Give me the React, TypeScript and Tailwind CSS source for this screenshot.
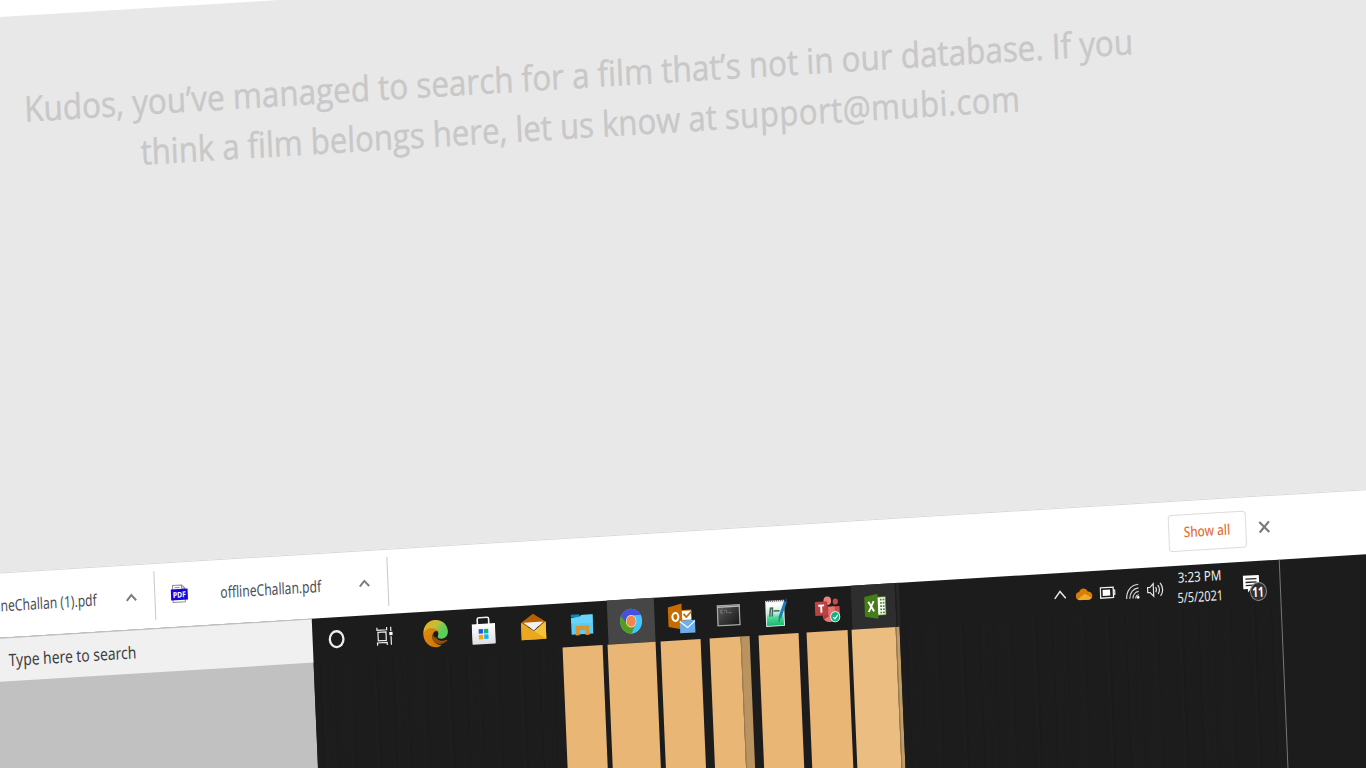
import React from "react";

const UI = "font-['Noto_Sans','Open_Sans',sans-serif]";

function Slot({ children, className = "" }: { children: React.ReactNode; className?: string }) {
  return <div className={"flex h-full w-[49px] shrink-0 items-center justify-center " + className}>{children}</div>;
}

function Caret() {
  return (
    <svg width="12" height="10" viewBox="0 0 12 10" fill="none" stroke="#7b7d80" strokeWidth="2">
      <path d="M1.3 8 6 2.6 10.7 8" />
    </svg>
  );
}

function Cortana() {
  return (
    <svg width="18" height="20" viewBox="0 0 18 20" fill="none">
      <ellipse cx="9" cy="10" rx="6.8" ry="7.9" stroke="#ededed" strokeWidth="2.3" />
    </svg>
  );
}

function TaskView() {
  return (
    <svg width="18" height="20" viewBox="0 0 18 20" fill="none" stroke="#ededed" strokeWidth="1.2">
      <path d="M1.6 1v2.7h9.700V1M2.500 5.800h8v8.400h-8zM1.600 19v-2.700h9.700V19M15.400 1v4.200M15.400 10.300V19" />
      <path d="M13.800 6h3.200v3.200h-3.200z" fill="#fff" stroke="none" />
    </svg>
  );
}

function Edge() {
  return (
    <svg width="26" height="29" viewBox="0 0 26 29">
      <defs>
        <linearGradient id="eg" x1="0" y1="0" x2="1" y2=".7">
          <stop offset="0" stopColor="#f1a51b" />
          <stop offset=".45" stopColor="#c9bd38" />
          <stop offset=".8" stopColor="#59cf58" />
        </linearGradient>
        <linearGradient id="eo" x1="0" y1="0" x2=".8" y2="1">
          <stop offset="0" stopColor="#e18c14" />
          <stop offset="1" stopColor="#ce7608" />
        </linearGradient>
      </defs>
      <path d="M.7 14C1 5.500 6.500 1 13 1c7.500 0 12.300 5.600 12.300 12 0 4.500-3 7-6.500 7-2.800 0-4.200-1.200-4-2.500 2-3 .5-6.200-2.600-7.300C8 9 3.500 10.200.7 14Z" fill="url(#eg)" />
      <path d="M.6 14C2 10.500 5.500 8.300 9 8.600c3.400.3 5.400 2.200 5.900 3.600-3 .1-5.300 2-5.300 5.300 0 4.500 3.400 9 9.100 8.500-1.800 1.600-4 2.400-6.200 2.200C5.600 27.700.5 21.700.6 14Z" fill="url(#eo)" />
      <path d="M10.600 13.900c-2.200 3.200-1 8.100 2.400 10.100 3.500 2.200 8 1.100 11.100-1.700.8-.8.3-1.300-.5-1-3.500 1.400-7.500.8-9.300-1.600-.8-1-.7-2 0-3-1.700-.4-3-1.200-3.700-2.800Z" fill="#965006" />
      <ellipse cx="13" cy="15.200" rx="2.300" ry="3.100" fill="#1c1c1c" />
    </svg>
  );
}

function Store() {
  return (
    <svg width="24" height="29" viewBox="0 0 24 29">
      <defs>
        <linearGradient id="st" x1="0" y1="0" x2="0" y2="1">
          <stop stopColor="#ffffff" />
          <stop offset="1" stopColor="#dedfe3" />
        </linearGradient>
      </defs>
      <path d="M6 10V3q0-1.700 1.600-1.700h8.200q1.600 0 1.600 1.700v7" fill="none" stroke="#f1f1f1" strokeWidth="1.600" />
      <path d="M.3 7.500h23.300V27q0 1-1 1H1.300q-1 0-1-1Z" fill="url(#st)" />
      <path d="M7 12.800h4.300v4.500H7z" fill="#2058e8" />
      <path d="M12.300 12.800h4.300v4.500h-4.300z" fill="#12b57c" />
      <path d="M7 18.400h4.300v4.500H7z" fill="#f5a40c" />
      <path d="M12.300 18.400h4.300v4.500h-4.300z" fill="#16b0fa" />
    </svg>
  );
}

function Mail() {
  return (
    <svg width="26" height="28" viewBox="0 0 26 28">
      <path d="M.6 9 12.800.7 25.200 9v4H.6z" fill="#b66003" />
      <path d="M.6 9 13 18 25.200 9v17.300H.6z" fill="#e8a51d" />
      <path d="M13 18 25.200 9v17.300z" fill="#f4c438" />
      <path d="M.6 9 25.200 26.300H.6z" fill="#e9a820" />
      <path d="m3 9 10 8.300L23 9z" fill="#f1f1f1" />
    </svg>
  );
}

function Explorer() {
  return (
    <svg width="23" height="23" viewBox="0 0 23 23">
      <path d="M.6 1h8l1 2.500H.6z" fill="#0689bc" />
      <path d="M.6 4.200 10 3l.8-1.300h11.500V21H.6z" fill="#5bcdf8" />
      <path d="M10.500 1.700h11.800V10H.6V5h9z" fill="#72d8fd" opacity=".6" />
      <path d="M4.700 22v-9.500h13.800V22h-4v-5h-5.800v5z" fill="#d9952f" />
    </svg>
  );
}

function Chrome() {
  return (
    <svg width="23" height="26" viewBox="0 0 24 26" preserveAspectRatio="none">
      <ellipse cx="12" cy="13" rx="11.500" ry="12.500" fill="#43c5ff" />
      <path d="M1.800 7C-1.600 14.500 2.200 24.500 12 25.400L17 15l-8-6Z" fill="#579c18" />
      <path d="M1.800 7.200C6-1.600 18-1.600 22.300 7.200H12c-3.500 0-5.500 2.500-5.500 6.800Z" fill="#4750dc" />
      <ellipse cx="12" cy="13" rx="5.500" ry="6.300" fill="#e5ece6" />
      <ellipse cx="12" cy="13" rx="4.800" ry="5.500" fill="#f5854f" />
    </svg>
  );
}

function Outlook() {
  return (
    <svg width="28" height="31" viewBox="0 0 28 31">
      <path d="M12 7h12v12H12z" fill="#d07708" />
      <path d="M14.500 8h9v9h-9z" fill="#fff" />
      <path d="m16 11 2.700 3.200L24 9" fill="none" stroke="#c76c00" strokeWidth="1.800" />
      <path d="m.6 3.500 13.800-3v26L.6 23.200z" fill="#c66c00" />
      <ellipse cx="7.800" cy="13.500" rx="3" ry="4" fill="none" stroke="#fff" strokeWidth="2" />
      <path d="M12 17.500h15.200v12.600H12z" fill="#6caeea" />
      <path d="m12 18.300 7.600 6.500 7.600-6.500" fill="none" stroke="#fff" strokeWidth="1.200" />
    </svg>
  );
}

function Terminal() {
  return (
    <svg width="24" height="22" viewBox="0 0 24 22">
      <defs>
        <linearGradient id="tm" x1="0" y1="0" x2="1" y2="1">
          <stop stopColor="#606060" />
          <stop offset=".5" stopColor="#383838" />
          <stop offset="1" stopColor="#171717" />
        </linearGradient>
      </defs>
      <path d="M1 1h22v20H1z" fill="url(#tm)" stroke="#a8a8a8" strokeWidth="1.300" />
      <path d="M1 2.500h22" stroke="#bababa" strokeWidth="1.400" />
      <path d="M6.500 5.500H4.400v3h2.100M8 5.600v.6m0 1.800v.6M9.200 5.300l1.600 3.500M12 8.500h3" fill="none" stroke="#888" strokeWidth=".8" />
    </svg>
  );
}

function Notepad() {
  return (
    <svg width="24" height="29" viewBox="0 0 24 29">
      <defs>
        <linearGradient id="np" x1="0" y1="0" x2="0" y2="1">
          <stop offset=".1" stopColor="#fff" />
          <stop offset=".48" stopColor="#c1ead5" />
          <stop offset=".65" stopColor="#4cda99" />
          <stop offset="1" stopColor="#15ba72" />
        </linearGradient>
      </defs>
      <path d="M1 2h18.800v26H1z" fill="#e8eeeb" />
      <path d="M2 4h16.800v23H2z" fill="url(#np)" />
      <path d="M2 2.500h17" stroke="#555" strokeWidth="1.400" strokeDasharray="1 1" />
      <path d="M5 18 6 9.500h2L7.500 18M9 12.500h6" fill="none" stroke="#43685a" strokeWidth="1.500" />
      <path d="m21.500 3-6.700 17" stroke="#1a83bd" strokeWidth="3" />
      <path d="m22.300 1-1.400 3" stroke="#293063" strokeWidth="2.500" />
      <path d="m14.800 20-1 3.500" stroke="#4f625c" strokeWidth="1.200" />
    </svg>
  );
}

function Teams() {
  return (
    <svg width="26" height="29" viewBox="0 0 26 29">
      <ellipse cx="13" cy="5.500" rx="3.800" ry="4.300" fill="#e98280" />
      <ellipse cx="21" cy="6.800" rx="2.600" ry="3" fill="#c84b49" />
      <path d="M17 11.500h8V20q0 5-4.500 5.200H17z" fill="#c84f4d" />
      <path d="M8 11.500h12v10q0 5-5 5.500-6-.2-7-6z" fill="#e67674" />
      <path d="M8 11.500h5.500v10L8.500 24z" fill="#ac3838" />
      <rect x=".4" y="6" width="12.600" height="14" rx=".8" fill="#bb4241" />
      <path d="M3.700 10h6M6.700 10v7" stroke="#fff" strokeWidth="1.900" />
      <ellipse cx="20.300" cy="22" rx="5" ry="5.600" fill="#fff" />
      <ellipse cx="20.300" cy="22" rx="4.200" ry="4.800" fill="#13b282" />
      <path d="m18.200 22.200 1.700 1.900 3-3.900" fill="none" stroke="#fff" strokeWidth="1.200" />
    </svg>
  );
}

function Excel() {
  return (
    <svg width="24" height="26" viewBox="0 0 24 26">
      <path d="M12 4h10v18H12z" fill="#fff" stroke="#4e912d" strokeWidth=".7" />
      <path d="M16.500 6.700h4.500M16.500 10h4.500M16.500 13.200h4.500M16.500 16.400h4.500M16.500 19.600h4.500" stroke="#4b8b27" strokeWidth="1.700" strokeDasharray="1.800 .9" />
      <path d="m1 3 13.300-2.500v25L1 22.800z" fill="#457d16" />
      <path d="m4.800 8 5.500 10M10.200 7.700 5 18.300" stroke="#fff" strokeWidth="1.900" />
    </svg>
  );
}

function PdfIcon() {
  return (
    <svg width="18" height="20" viewBox="0 0 18 20">
      <path d="M2.500 18.500V1.500h9.200l3 3.300v13.700z" fill="#fff" stroke="#8b8b91" />
      <path d="M4.500 3.800h5M11.500 1.500v3.300h3.200" fill="none" stroke="#8b8b91" />
      <path d="M.6 5.500h16.800v11H.6z" fill="#1706dd" />
      <text x="9" y="13.900" textAnchor="middle" textLength="13" lengthAdjust="spacingAndGlyphs" fill="#fff" fontFamily="Noto Sans" fontSize="8" fontWeight="700">PDF</text>
    </svg>
  );
}

const streaks =
  "bg-[repeating-linear-gradient(90deg,#1c1c1c_0px,#1c1c1c_5px,#1a1a1a_7px,#1d1d1d_8px,#1c1c1c_17px,#1e1e1e_18px,#1b1b1b_20px,#1c1c1c_22px,#1d1d1d_37px,#1b1b1b_38px,#1c1c1c_41px,#1c1c1c_59px,#1e1e1e_61px,#1a1a1a_63px,#1c1c1c_66px,#1c1c1c_73px)]";

export default function App() {
  return (
    <div className="h-[768px] w-[1366px] overflow-hidden bg-white">
      <div className="-ml-[40px] h-[880px] w-[1450px] origin-top-left transform-[matrix(1,-0.061,0.042,1,0,2.44)]">
        <header className="h-[17px] bg-white" />

        <main className="flex h-[554px] flex-col items-center bg-[#e8e8e8] pt-[68px] pr-[223px] font-['Open_Sans',sans-serif] text-[35px] leading-[49.500px] text-[#c8c8c8] [-webkit-text-stroke:0.5px_#c8c8c8]">
          <p className="scale-x-[.897] whitespace-nowrap">Kudos, you’ve managed to search for a film that’s not in our database. If you</p>
          <p className="scale-x-[.889] whitespace-nowrap">
            think a film belongs here, let us know at <span className="tracking-[.540px]">support@mubi.com</span>
          </p>
        </main>

        <section className={"flex h-[65px] border-t border-[#dbd7d6] bg-white text-[16px] text-[#4b4e57] " + UI}>
          <div className="flex w-[111.500px] items-center justify-end">
            <span className="origin-right scale-x-[.755] whitespace-nowrap">offlineChallan (1).pdf</span>
          </div>
          <div className="flex w-[57px] items-center pl-[28px]"><Caret /></div>
          <div className="mt-[7px] h-[49px] w-px bg-[#c9c9c9]" />
          <div className="flex w-[65px] items-center pb-[2px] pl-[15.500px]"><PdfIcon /></div>
          <div className="flex w-[138px] items-center">
            <span className="origin-left scale-x-[.755] whitespace-nowrap">offlineChallan.pdf</span>
          </div>
          <div className="flex w-[29px] items-center"><Caret /></div>
          <div className="mt-[7px] h-[49px] w-px bg-[#c9c9c9]" />
          <div className="ml-[780px] mt-[12.500px] flex h-[37px] w-[78px] items-center justify-center rounded-[4px] border border-[#dfdbda] text-[14.500px] font-medium text-[#e4713a]">
            <span className="scale-x-[.81] whitespace-nowrap">Show all</span>
          </div>
          <div className="flex w-[30px] items-center pb-[3px] pl-[12px]">
            <svg width="12" height="13" viewBox="0 0 12 13" stroke="#77787a" strokeWidth="2.100">
              <path d="m1.200 1.200 9.600 10.600M10.800 1.200 1.200 11.800" />
            </svg>
          </div>
        </section>

        <div className="bg-[#1c1c1c]">
          <section className={"flex h-[44px] " + UI}>
            <div className="-mb-px flex w-[325px] items-center border-t border-[#bdbdbd] bg-[#f0f0f0] pl-[21px] text-[17px] text-[#3b3d42]">
              <span className="origin-left scale-x-[.815] whitespace-nowrap">Type here to search</span>
            </div>
            <Slot className="pr-[2px]"><Cortana /></Slot>
            <Slot className="pr-[4px]"><TaskView /></Slot>
            <Slot><Edge /></Slot>
            <Slot className="pr-[1px]"><Store /></Slot>
            <Slot><Mail /></Slot>
            <Slot><Explorer /></Slot>
            <div className="flex w-[49px] pl-[.500px] pr-[.800px]">
              <div className="flex w-full items-center justify-center bg-[#464646]"><Chrome /></div>
            </div>
            <Slot className="pl-[2px]"><Outlook /></Slot>
            <Slot className="pr-[1px]"><Terminal /></Slot>
            <Slot className="pr-[3px]"><Notepad /></Slot>
            <Slot><Teams /></Slot>
            <div className="flex w-[44px] items-center justify-center bg-[#2e2e2e] pl-[4px]"><Excel /></div>
            <div className="w-[3.500px] border-l border-[#1c1c1c] bg-[#282828]" />
            <div className="ml-[154px] flex w-[13px] items-center">
              <svg width="13" height="10" viewBox="0 0 13 10" fill="none" stroke="#e9e9e9" strokeWidth="1.500"><path d="m1 8.500 5.500-7 5.500 7" /></svg>
            </div>
            <div className="ml-[9px] flex w-[17px] items-center">
              <svg width="17" height="13" viewBox="0 0 17 13">
                <path d="M3 12a3 3.800 0 0 1 .4-7.600C4.600 0 10.500-.6 12.200 4.200 17.500 4 18 11.500 14 12.200z" fill="#d87e07" />
                <path d="m2 11.200 7-5 6.700 4.300Q15 12.500 13 12.500H3.500z" fill="#eeac29" />
              </svg>
            </div>
            <div className="ml-[7.500px] flex w-[16px] items-center">
              <svg width="16" height="13" viewBox="0 0 16 13"><path d="M.8 1.300h12.900v10.400H.8zM14.200 4.500h1v4h-1" fill="none" stroke="#eee" strokeWidth="1.300" /><path d="M3 3.500h7.500v6H3z" fill="#fff" /></svg>
            </div>
            <div className="ml-[10px] flex w-[14px] items-center pt-[1px]">
              <svg width="14" height="16" viewBox="0 0 14 16" fill="none" stroke="#d4d4d4" strokeWidth="1.200">
                <path d="M.7 15C.7 6.800 6 1 13 1M3.800 15C4 8.800 8 4.700 13 4.600M7 15c.2-4 2.800-6.600 6-6.800" />
                <path d="M9.800 15c.1-2 1.300-3.400 3.200-3.500" /><circle cx="12.200" cy="14" r="1.400" fill="#fff" stroke="none" />
              </svg>
            </div>
            <div className="ml-[7px] flex w-[18px] items-center">
              <svg width="18" height="17" viewBox="0 0 18 17" fill="none" stroke="#e2e2e2" strokeWidth="1.200">
                <path d="M1 6h2.300l3.500-3.800v12.600L3.300 11H1zM9 6q1.500 2.500 0 5M11.300 4q3 4.500 0 9M13.700 2q4.600 6.500 0 13" />
              </svg>
            </div>
            <div className="flex w-[70px] flex-col items-center justify-center text-[14px] leading-[20px] text-[#ededed]">
              <span className="scale-x-[.83] whitespace-nowrap">3:23 PM</span>
              <span className="scale-x-[.78] whitespace-nowrap">5/5/2021</span>
            </div>
            <div className="relative flex w-[45.300px] items-center pl-[8px]">
              <svg width="17" height="19" viewBox="0 0 17 19">
                <path d="M.5 1h16v13.500H8L5 18v-3.500H.5z" fill="#fff" />
                <path d="M3 4.500h11M3 7.800h11M3 11h8" stroke="#222" strokeWidth="1.300" />
              </svg>
              <span className="absolute left-[15px] top-[21px] flex h-[19px] w-[17px] items-center justify-center rounded-[50%] border border-[#8b8b8b] bg-[#303030] text-[14px] font-bold leading-none text-white">
                <span className="scale-x-[.72]">11</span>
              </span>
            </div>
            <div className="w-px bg-[#777777]" />
          </section>

          <section className="flex h-[200px]">
            <div className="w-[325px] bg-[#c1c1c1]" />
            <div className={"w-[249.200px] " + streaks} />
            <div className="w-[40.200px] bg-[#eab676]" />
            <div className="ml-[4.800px] w-[47.700px] bg-[#eab676]" />
            <div className="ml-[5.100px] w-[40.200px] bg-[#eab676]" />
            <div className="ml-[8.700px] w-[31px] bg-[#eab676]" />
            <div className="w-[9px] border-l border-[#a07c4d] bg-[#ba9460]" />
            <div className="ml-[8.800px] w-[40.500px] bg-[#eab676]" />
            <div className="ml-[8.300px] w-[40.200px] bg-[#eab676]" />
            <div className="ml-[4.800px] w-[43.700px] bg-[#ebbd81]" />
            <div className="w-[4px] border-l border-[#94754c] bg-[#c19c69]" />
            <div className={"w-[381.100px] " + streaks} />
            <div className="w-px bg-[#777777]" />
          </section>
        </div>
      </div>
    </div>
  );
}
